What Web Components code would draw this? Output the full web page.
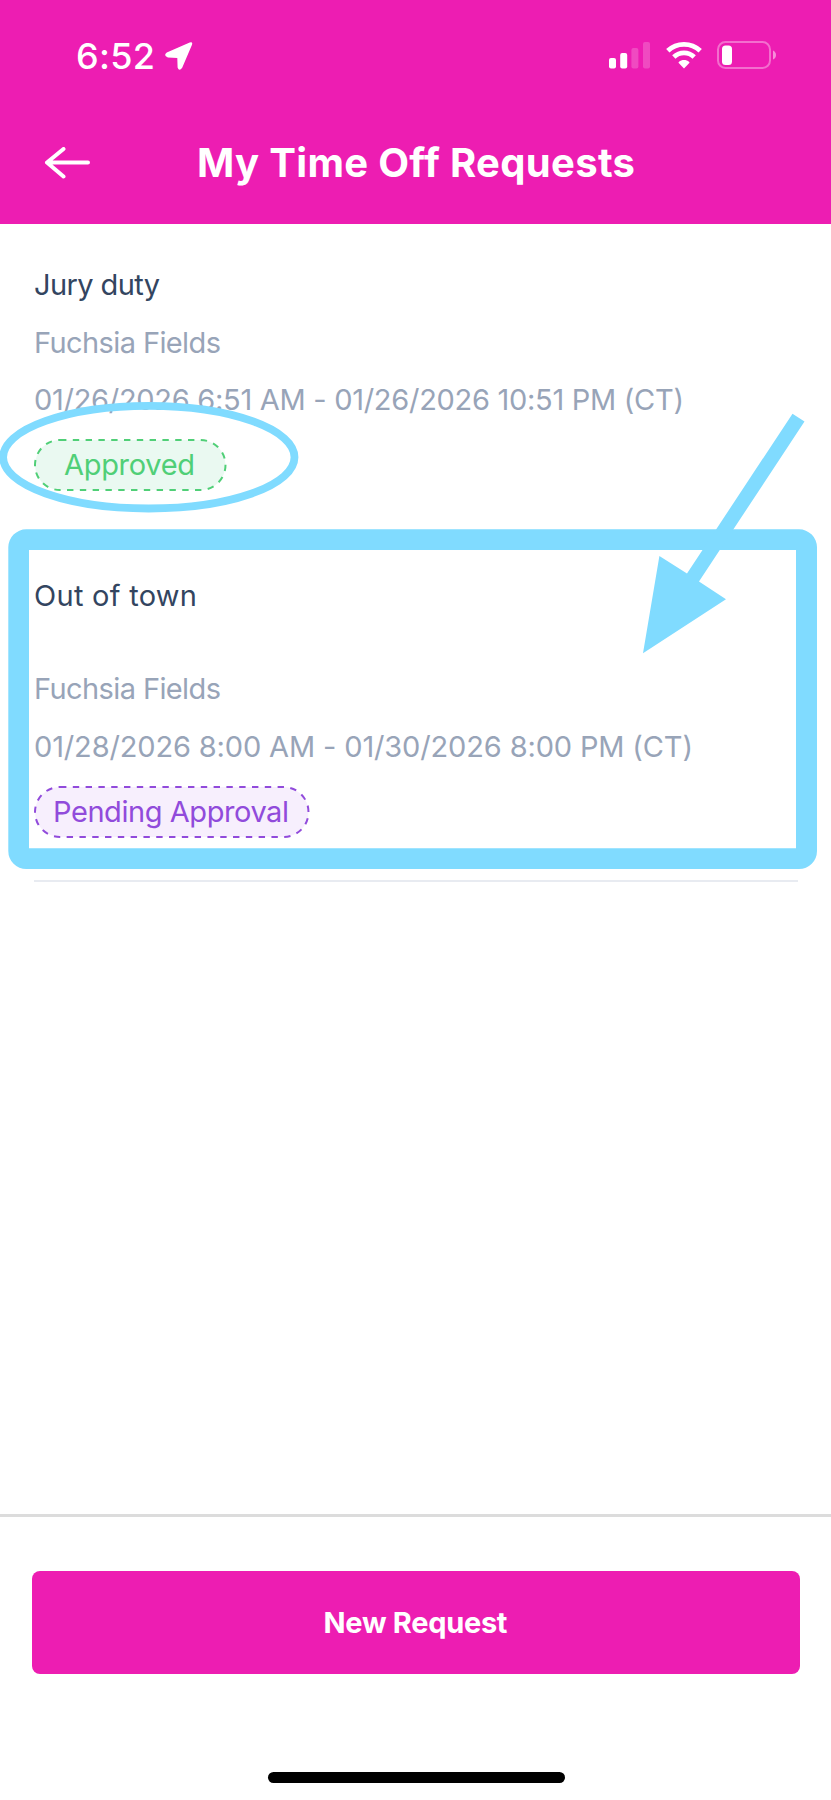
<!DOCTYPE html>
<html lang="en">
<head>
<meta charset="utf-8">
<title>My Time Off Requests</title>
<style>
html,body{margin:0;padding:0;background:#fff}
body{font-family:Inter,Lato,sans-serif}
</style>
</head>
<body>
<time-off-app></time-off-app>
<script>
const define = (name, html, setup) => customElements.define(name, class extends HTMLElement {
  connectedCallback() {
    if (this.shadowRoot) return;
    const t = document.createElement('template');
    t.innerHTML = html;
    this.attachShadow({mode: 'open'}).append(t.content.cloneNode(true));
    if (setup) setup(this, this.shadowRoot);
  }
});

// Text tracked out so that its advance equals the "width" attribute.
define('tracked-text', `<style>:host{display:block;white-space:nowrap}span{display:inline-block}</style><span><slot></slot></span>`, (el, root) => {
  const s = root.querySelector('span');
  const gaps = el.textContent.length - 1;
  const space = (Number(el.getAttribute('width')) - s.getBoundingClientRect().width) / gaps;
  s.style.letterSpacing = space + 'px';
  s.style.marginRight = -space + 'px';
});

define('status-bar', `<style>
:host{display:flex;height:112px;box-sizing:border-box;padding:41px 54px 0 76px;align-items:flex-start;color:#fff}
tracked-text{font:500 36px/30px Inter,sans-serif}
svg{display:block;flex:none}
.loc{margin-left:10px}.signal{margin-left:auto}.wifi{margin-left:15px}.battery{margin-left:15px}
</style>
<tracked-text width="79">6:52</tracked-text>
<svg class="loc" width="29" height="30" viewBox="0 0 29 30"><path d="M1.8 11.6 24.7 1.4Q28 .4 27 3.8L17.2 26.7Q14.2 31 12.6 26.6L12.3 17 2.9 16.4Q-2 14.4 1.8 11.6Z" fill="#fff"/></svg>
<svg class="signal" width="42" height="28" viewBox="0 0 42 28" fill="#fff"><rect x="0" y="17" width="7" height="10.5" rx="2"/><rect x="11.2" y="12" width="7" height="15.5" rx="2"/><rect x="22.4" y="7" width="7" height="20.5" rx="2" opacity=".2"/><rect x="34" y="1" width="7" height="26.5" rx="2" opacity=".2"/></svg>
<svg class="wifi" width="36" height="28" viewBox="0 0 36 28"><g fill="none" stroke="#fff" stroke-width="4.8"><path d="M1.8 9.8C10.8 1.2 25.2 1.2 34.2 9.8"/><path d="M7.8 16C13.7 10.5 22.3 10.5 28.2 16"/></g><path d="M18 27.5 12.7 22.1Q12.2 21.5 12.8 20.9C15.8 18.5 20.2 18.5 23.2 20.9Q23.8 21.5 23.3 22.1Z" fill="#fff"/></svg>
<svg class="battery" width="60" height="28" viewBox="0 0 60 28"><rect x="1" y="1" width="52" height="26" rx="7.5" fill="none" stroke="#fff" stroke-opacity=".36" stroke-width="2"/><rect x="5" y="4.5" width="10" height="19.5" rx="3.5" fill="#fff"/><path d="M56 9.5Q59 11 59 14T56 18.5Z" fill="#fff" opacity=".5"/></svg>`);

define('title-bar', `<style>
:host{display:flex;height:112px;box-sizing:border-box;padding:24px 0 0 44px;color:#fff}
svg{display:block;margin-top:11px}
tracked-text{margin-left:106px;font-weight:700;font-size:40px;line-height:54px}
</style>
<svg width="47" height="32" viewBox="0 0 47 32" fill="none" stroke="#fff" stroke-width="4" stroke-linecap="round" stroke-linejoin="round"><path d="M44 15.5H3M19.5 2 3 15.5 19.5 29.5"/></svg>
<tracked-text width="438"><slot></slot></tracked-text>`, (el, root) => {
  const t = root.querySelector('tracked-text');
  t.replaceWith(Object.assign(t.cloneNode(), {textContent: el.textContent}));
});

define('status-badge', `<style>
:host{display:grid;width:var(--w);height:52px}
svg,.label{grid-area:1/1;display:block}
.label{line-height:52px;padding-left:var(--pad);color:var(--ink)}
rect{fill:var(--fill);stroke:var(--ink);stroke-width:2;stroke-dasharray:6.4 6.4}
</style><svg height="52"><rect x="1" y="1" height="50" rx="25"/></svg><div class="label"><slot></slot></div>`, (el, root) => {
  const w = Number(el.getAttribute('size'));
  el.style.setProperty('--w', w + 'px');
  root.querySelector('svg').setAttribute('width', w);
  root.querySelector('rect').setAttribute('width', w - 2);
});

define('request-card', `<style>
:host{display:block;font-size:29px;font-weight:400;line-height:40px;color:#98a4b8}
.title{color:#334560}
.place{margin-top:var(--place-gap,18px)}
.dates{margin-top:17.5px}
.status{margin-top:19px}
</style>
<div class="title"><slot name="title"></slot></div>
<div class="place"><slot name="place"></slot></div>
<div class="dates"><slot name="dates"></slot></div>
<div class="status"><slot name="status"></slot></div>`);

define('new-request-footer', `<style>
:host{display:flex;flex-direction:column;align-items:center;box-sizing:border-box;height:286px;border-top:3px solid #dcdcdc;padding-top:54px}
button{box-sizing:border-box;width:768px;height:102.5px;border:0;border-radius:8px;background:#ed1db2;color:#fff;font:700 29px/40px Inter,sans-serif;padding:2px 0 0;display:flex;align-items:center;justify-content:center}
.home{width:296.5px;height:11px;border-radius:6px;background:#000;margin-top:98.5px;margin-left:2px}
</style>
<button><tracked-text width="184">New Request</tracked-text></button><div class="home"></div>`);

// Hand-drawn callouts that lie over the list.
define('callout-layer', `<style>:host{position:absolute;inset:0;pointer-events:none}svg{display:block}</style>
<svg width="831" height="1800" viewBox="0 0 831 1800" fill="none" stroke="#80dbff">
<ellipse cx="148.8" cy="457.2" rx="145.7" ry="51.3" stroke-width="7.8"/>
<path d="M8.3 547.3A18 18 0 0 1 26.3 529.3H799A18 18 0 0 1 817 547.3V851A18 18 0 0 1 799 869H26.3A18 18 0 0 1 8.3 851ZM29 550V848.3H796V550Z" fill="#80dbff" fill-rule="evenodd" stroke="none"/>
<path d="M792.5 413.7 804.5 421.5 699 581.5 726 599.3 643 653.2 659.4 556 687 573.5Z" fill="#80dbff" stroke="none"/></svg>`);

define('time-off-app', `<style>
:host{display:flex;flex-direction:column;position:relative;width:831px;height:1800px;overflow:hidden;background:#fff}
header{background:#ed1db2}
main{flex:1;padding:40.5px 33px 0 34px}
.second{margin-top:84.5px;--place-gap:53.5px}
.rule{height:2px;background:#e8ebf1;margin-top:42px}
.green{--ink:#50cf77;--fill:#eaf9f1;--pad:30px}
.purple{--ink:#914bdb;--fill:#f7effd;--pad:19px}
</style>
<header><status-bar></status-bar><title-bar>My Time Off Requests</title-bar></header>
<main>
<request-card>
<tracked-text slot="title" width="126">Jury duty</tracked-text>
<tracked-text slot="place" width="187">Fuchsia Fields</tracked-text>
<tracked-text slot="dates" width="650">01/26/2026 6:51 AM - 01/26/2026 10:51 PM (CT)</tracked-text>
<status-badge slot="status" class="green" size="192.5"><tracked-text width="131">Approved</tracked-text></status-badge>
</request-card>
<request-card class="second">
<tracked-text slot="title" width="163">Out of town</tracked-text>
<tracked-text slot="place" width="187">Fuchsia Fields</tracked-text>
<tracked-text slot="dates" width="659">01/28/2026 8:00 AM - 01/30/2026 8:00 PM (CT)</tracked-text>
<status-badge slot="status" class="purple" size="275.5"><tracked-text width="236">Pending Approval</tracked-text></status-badge>
</request-card>
<div class="rule"></div>
</main>
<new-request-footer></new-request-footer>
<callout-layer></callout-layer>`);
</script>
</body>
</html>
